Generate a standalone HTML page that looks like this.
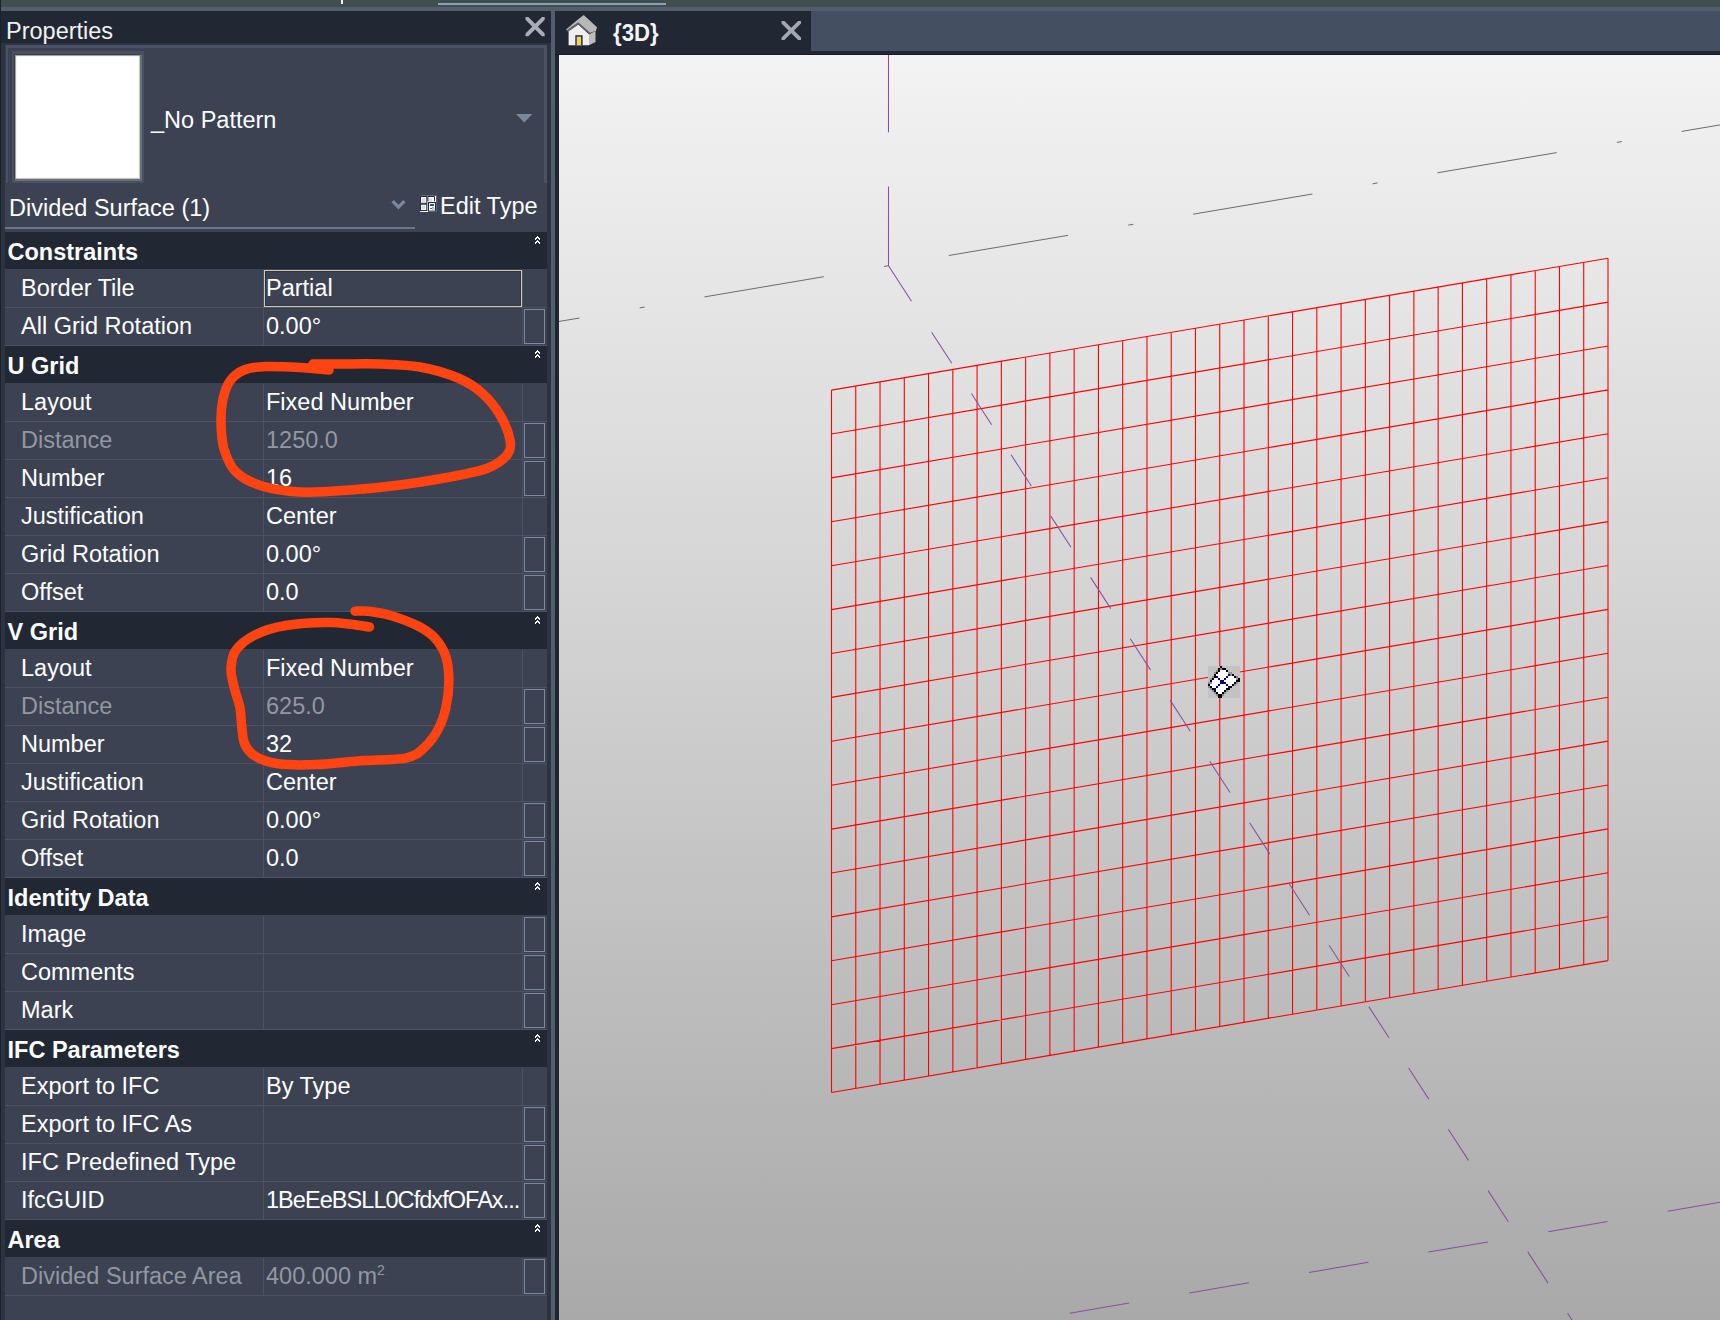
<!DOCTYPE html>
<html><head><meta charset="utf-8"><title>Revit</title>
<style>
*{margin:0;padding:0;box-sizing:border-box}
html,body{width:1720px;height:1320px;overflow:hidden;background:#1f2631;font-family:"Liberation Sans", sans-serif;}
.a{position:absolute}
.t{position:absolute;white-space:nowrap;color:#ffffff;font-size:23.5px;line-height:37px;height:37px}
.g{color:#8b909a}
.h{position:absolute;left:5px;width:542px;height:37px;background:#212833}
.ht{position:absolute;left:2.5px;top:2px;font-weight:bold;color:#fff;font-size:23.5px;line-height:37px;white-space:nowrap}
.r{position:absolute;left:5px;width:542px;height:38px;background:#3c4252;border-bottom:1px solid #4a5263}
.c1{position:absolute;left:258px;top:0;width:1px;height:37px;background:#4a5263}
.c2{position:absolute;left:517px;top:0;width:1px;height:37px;background:#4a5263}
.bx{position:absolute;left:519px;top:1px;width:21px;height:35px;border:1px solid #7d88a0}
.lb{position:absolute;left:16px;top:0px;white-space:nowrap;color:#fff;font-size:23.5px;line-height:37px}
.vl{position:absolute;left:261px;top:0px;white-space:nowrap;color:#fff;font-size:23.5px;line-height:37px}
.lb.g,.vl.g{color:#9397a1}
</style></head><body>

<div class="a" style="left:0;top:0;width:1720px;height:7px;background:#414e4e"></div>
<div class="a" style="left:341px;top:0;width:2px;height:4px;background:#f4f4f4"></div>
<div class="a" style="left:438px;top:3px;width:228px;height:2px;background:#8aa0b4"></div>
<div class="a" style="left:0;top:7px;width:1720px;height:4px;background:#525e6e"></div>
<div class="a" style="left:0;top:0;width:1px;height:1320px;background:#1c2129"></div>
<div class="a" style="left:1px;top:11px;width:550px;height:1309px;background:#2d3340"></div>
<div class="a" style="left:1px;top:11px;width:550px;height:32px;background:#212833"></div>
<div class="t" style="left:6px;top:12.5px;color:#f2f2f2">Properties</div>
<svg class="a" style="left:0;top:0" width="560" height="50"><defs><clipPath id="cx1"><rect x="525.5" y="17" width="19.2" height="19.3"/></clipPath></defs><path clip-path="url(#cx1)" d="M523.3 14.7 L547 38.6 M547 14.7 L523.3 38.6" stroke="#a8adb8" stroke-width="3.9"/></svg>
<div class="a" style="left:5px;top:45px;width:542px;height:138px;background:#3c4252;border-top:3px solid #4a5366;border-left:3px solid #4a5366;border-right:3px solid #4a5366"></div>
<div class="a" style="left:5px;top:45px;width:1px;height:138px;background:#394050"></div>
<div class="a" style="left:12px;top:51px;width:132px;height:132px;background:#475064"></div>
<div class="a" style="left:14px;top:54px;width:128px;height:127px;background:#fff;border-style:solid;border-width:1px 2px 2px 1px;border-color:#3e3e3e #6e6e6e #6e6e6e #3e3e3e;box-shadow:inset 1px 1px 1px #9a9a9a, inset -1px -1px 1px #c0c0c0"></div>
<div class="t" style="left:151px;top:102px">_No Pattern</div>
<svg class="a" style="left:510px;top:108px" width="30" height="20"><path d="M6 6 L22.5 6 L14.25 14.5 Z" fill="#7a879c"/></svg>
<div class="a" style="left:5px;top:183px;width:542px;height:49px;background:#3c4252"></div>
<div class="t" style="left:9px;top:190px">Divided Surface (1)</div>
<svg class="a" style="left:386px;top:194px" width="26" height="22"><path d="M6.6 7.2 L12.5 13.1 L18.4 7.2" fill="none" stroke="#7a879c" stroke-width="3.3"/></svg>
<div class="a" style="left:5px;top:227px;width:410px;height:2px;background:#6a7688"></div>
<svg class="a" style="left:0;top:0" width="440" height="215">
<rect x="420.2" y="195.8" width="16" height="16.2" fill="#fbfbfb"/>
<rect x="420.5" y="196.5" width="6.3" height="6.8" fill="#f4f5f7" stroke="#262a33" stroke-width="1"/>
<rect x="422" y="198.5" width="3" height="3.3" fill="#d9dbe0"/>
<path d="M427.9 196.5 H434.5 V201.3 M427.9 196.5 V201.3" fill="none" stroke="#262a33" stroke-width="1"/>
<rect x="429" y="198.5" width="3" height="2.8" fill="#d9dbe0"/>
<rect x="420.5" y="204.2" width="6.3" height="6.3" fill="#f4f5f7" stroke="#262a33" stroke-width="1"/>
<rect x="422" y="205.8" width="3" height="3.2" fill="#d9dbe0"/>
<rect x="428.5" y="202.5" width="7" height="8.7" fill="#fff" stroke="#262a33" stroke-width="1.1"/>
<rect x="430" y="204" width="4" height="2" rx="0.5" fill="#0a4fb4"/>
<rect x="430.2" y="208" width="1.6" height="0.9" fill="#262a33"/>
<path d="M432.9 207.2 L433.8 208.4 L432.9 209.6 L432 208.4 Z" fill="#fff" stroke="#4a5a80" stroke-width="0.7"/>
</svg>
<div class="t" style="left:440px;top:187.5px">Edit Type</div>
<div class="a" style="left:5px;top:232px;width:542px;height:1088px;background:#3c4252"></div>
<div class="h" style="top:232px"><div class="ht">Constraints</div><svg class="a" style="left:520px;top:0px" width="20" height="16" fill="#fff" shape-rendering="crispEdges"><rect x="12" y="4" width="1" height="1"/><rect x="11" y="5" width="1" height="1"/><rect x="12" y="5" width="1" height="1"/><rect x="13" y="5" width="1" height="1"/><rect x="10" y="6" width="1" height="1"/><rect x="11" y="6" width="1" height="1"/><rect x="13" y="6" width="1" height="1"/><rect x="14" y="6" width="1" height="1"/><rect x="10" y="7" width="1" height="1"/><rect x="14" y="7" width="1" height="1"/><rect x="12" y="8" width="1" height="1"/><rect x="11" y="9" width="1" height="1"/><rect x="12" y="9" width="1" height="1"/><rect x="13" y="9" width="1" height="1"/><rect x="10" y="10" width="1" height="1"/><rect x="11" y="10" width="1" height="1"/><rect x="13" y="10" width="1" height="1"/><rect x="14" y="10" width="1" height="1"/><rect x="10" y="11" width="1" height="1"/><rect x="14" y="11" width="1" height="1"/></svg></div>
<div class="r" style="top:270px"><div class="c1"></div><div class="c2"></div><div class="lb">Border Tile</div><div class="a" style="left:259px;top:0;width:258px;height:37px;border:1px solid #d4c8b0;box-shadow:inset 0 0 0 1px #2e3442"></div><div class="vl" style="">Partial</div></div>
<div class="r" style="top:308px"><div class="c1"></div><div class="c2"></div><div class="lb">All Grid Rotation</div><div class="vl" style="">0.00°</div><div class="bx"></div></div>
<div class="h" style="top:346px"><div class="ht">U Grid</div><svg class="a" style="left:520px;top:0px" width="20" height="16" fill="#fff" shape-rendering="crispEdges"><rect x="12" y="4" width="1" height="1"/><rect x="11" y="5" width="1" height="1"/><rect x="12" y="5" width="1" height="1"/><rect x="13" y="5" width="1" height="1"/><rect x="10" y="6" width="1" height="1"/><rect x="11" y="6" width="1" height="1"/><rect x="13" y="6" width="1" height="1"/><rect x="14" y="6" width="1" height="1"/><rect x="10" y="7" width="1" height="1"/><rect x="14" y="7" width="1" height="1"/><rect x="12" y="8" width="1" height="1"/><rect x="11" y="9" width="1" height="1"/><rect x="12" y="9" width="1" height="1"/><rect x="13" y="9" width="1" height="1"/><rect x="10" y="10" width="1" height="1"/><rect x="11" y="10" width="1" height="1"/><rect x="13" y="10" width="1" height="1"/><rect x="14" y="10" width="1" height="1"/><rect x="10" y="11" width="1" height="1"/><rect x="14" y="11" width="1" height="1"/></svg></div>
<div class="r" style="top:384px"><div class="c1"></div><div class="c2"></div><div class="lb">Layout</div><div class="vl" style="">Fixed Number</div></div>
<div class="r" style="top:422px"><div class="c1"></div><div class="c2"></div><div class="lb g">Distance</div><div class="vl g" style="">1250.0</div><div class="bx"></div></div>
<div class="r" style="top:460px"><div class="c1"></div><div class="c2"></div><div class="lb">Number</div><div class="vl" style="">16</div><div class="bx"></div></div>
<div class="r" style="top:498px"><div class="c1"></div><div class="c2"></div><div class="lb">Justification</div><div class="vl" style="">Center</div></div>
<div class="r" style="top:536px"><div class="c1"></div><div class="c2"></div><div class="lb">Grid Rotation</div><div class="vl" style="">0.00°</div><div class="bx"></div></div>
<div class="r" style="top:574px"><div class="c1"></div><div class="c2"></div><div class="lb">Offset</div><div class="vl" style="">0.0</div><div class="bx"></div></div>
<div class="h" style="top:612px"><div class="ht">V Grid</div><svg class="a" style="left:520px;top:0px" width="20" height="16" fill="#fff" shape-rendering="crispEdges"><rect x="12" y="4" width="1" height="1"/><rect x="11" y="5" width="1" height="1"/><rect x="12" y="5" width="1" height="1"/><rect x="13" y="5" width="1" height="1"/><rect x="10" y="6" width="1" height="1"/><rect x="11" y="6" width="1" height="1"/><rect x="13" y="6" width="1" height="1"/><rect x="14" y="6" width="1" height="1"/><rect x="10" y="7" width="1" height="1"/><rect x="14" y="7" width="1" height="1"/><rect x="12" y="8" width="1" height="1"/><rect x="11" y="9" width="1" height="1"/><rect x="12" y="9" width="1" height="1"/><rect x="13" y="9" width="1" height="1"/><rect x="10" y="10" width="1" height="1"/><rect x="11" y="10" width="1" height="1"/><rect x="13" y="10" width="1" height="1"/><rect x="14" y="10" width="1" height="1"/><rect x="10" y="11" width="1" height="1"/><rect x="14" y="11" width="1" height="1"/></svg></div>
<div class="r" style="top:650px"><div class="c1"></div><div class="c2"></div><div class="lb">Layout</div><div class="vl" style="">Fixed Number</div></div>
<div class="r" style="top:688px"><div class="c1"></div><div class="c2"></div><div class="lb g">Distance</div><div class="vl g" style="">625.0</div><div class="bx"></div></div>
<div class="r" style="top:726px"><div class="c1"></div><div class="c2"></div><div class="lb">Number</div><div class="vl" style="">32</div><div class="bx"></div></div>
<div class="r" style="top:764px"><div class="c1"></div><div class="c2"></div><div class="lb">Justification</div><div class="vl" style="">Center</div></div>
<div class="r" style="top:802px"><div class="c1"></div><div class="c2"></div><div class="lb">Grid Rotation</div><div class="vl" style="">0.00°</div><div class="bx"></div></div>
<div class="r" style="top:840px"><div class="c1"></div><div class="c2"></div><div class="lb">Offset</div><div class="vl" style="">0.0</div><div class="bx"></div></div>
<div class="h" style="top:878px"><div class="ht">Identity Data</div><svg class="a" style="left:520px;top:0px" width="20" height="16" fill="#fff" shape-rendering="crispEdges"><rect x="12" y="4" width="1" height="1"/><rect x="11" y="5" width="1" height="1"/><rect x="12" y="5" width="1" height="1"/><rect x="13" y="5" width="1" height="1"/><rect x="10" y="6" width="1" height="1"/><rect x="11" y="6" width="1" height="1"/><rect x="13" y="6" width="1" height="1"/><rect x="14" y="6" width="1" height="1"/><rect x="10" y="7" width="1" height="1"/><rect x="14" y="7" width="1" height="1"/><rect x="12" y="8" width="1" height="1"/><rect x="11" y="9" width="1" height="1"/><rect x="12" y="9" width="1" height="1"/><rect x="13" y="9" width="1" height="1"/><rect x="10" y="10" width="1" height="1"/><rect x="11" y="10" width="1" height="1"/><rect x="13" y="10" width="1" height="1"/><rect x="14" y="10" width="1" height="1"/><rect x="10" y="11" width="1" height="1"/><rect x="14" y="11" width="1" height="1"/></svg></div>
<div class="r" style="top:916px"><div class="c1"></div><div class="c2"></div><div class="lb">Image</div><div class="bx"></div></div>
<div class="r" style="top:954px"><div class="c1"></div><div class="c2"></div><div class="lb">Comments</div><div class="bx"></div></div>
<div class="r" style="top:992px"><div class="c1"></div><div class="c2"></div><div class="lb">Mark</div><div class="bx"></div></div>
<div class="h" style="top:1030px"><div class="ht">IFC Parameters</div><svg class="a" style="left:520px;top:0px" width="20" height="16" fill="#fff" shape-rendering="crispEdges"><rect x="12" y="4" width="1" height="1"/><rect x="11" y="5" width="1" height="1"/><rect x="12" y="5" width="1" height="1"/><rect x="13" y="5" width="1" height="1"/><rect x="10" y="6" width="1" height="1"/><rect x="11" y="6" width="1" height="1"/><rect x="13" y="6" width="1" height="1"/><rect x="14" y="6" width="1" height="1"/><rect x="10" y="7" width="1" height="1"/><rect x="14" y="7" width="1" height="1"/><rect x="12" y="8" width="1" height="1"/><rect x="11" y="9" width="1" height="1"/><rect x="12" y="9" width="1" height="1"/><rect x="13" y="9" width="1" height="1"/><rect x="10" y="10" width="1" height="1"/><rect x="11" y="10" width="1" height="1"/><rect x="13" y="10" width="1" height="1"/><rect x="14" y="10" width="1" height="1"/><rect x="10" y="11" width="1" height="1"/><rect x="14" y="11" width="1" height="1"/></svg></div>
<div class="r" style="top:1068px"><div class="c1"></div><div class="c2"></div><div class="lb">Export to IFC</div><div class="vl" style="">By Type</div></div>
<div class="r" style="top:1106px"><div class="c1"></div><div class="c2"></div><div class="lb">Export to IFC As</div><div class="bx"></div></div>
<div class="r" style="top:1144px"><div class="c1"></div><div class="c2"></div><div class="lb">IFC Predefined Type</div><div class="bx"></div></div>
<div class="r" style="top:1182px"><div class="c1"></div><div class="c2"></div><div class="lb">IfcGUID</div><div class="vl" style=";letter-spacing:-0.95px">1BeEeBSLL0CfdxfOFAx...</div><div class="bx"></div></div>
<div class="h" style="top:1220px"><div class="ht">Area</div><svg class="a" style="left:520px;top:0px" width="20" height="16" fill="#fff" shape-rendering="crispEdges"><rect x="12" y="4" width="1" height="1"/><rect x="11" y="5" width="1" height="1"/><rect x="12" y="5" width="1" height="1"/><rect x="13" y="5" width="1" height="1"/><rect x="10" y="6" width="1" height="1"/><rect x="11" y="6" width="1" height="1"/><rect x="13" y="6" width="1" height="1"/><rect x="14" y="6" width="1" height="1"/><rect x="10" y="7" width="1" height="1"/><rect x="14" y="7" width="1" height="1"/><rect x="12" y="8" width="1" height="1"/><rect x="11" y="9" width="1" height="1"/><rect x="12" y="9" width="1" height="1"/><rect x="13" y="9" width="1" height="1"/><rect x="10" y="10" width="1" height="1"/><rect x="11" y="10" width="1" height="1"/><rect x="13" y="10" width="1" height="1"/><rect x="14" y="10" width="1" height="1"/><rect x="10" y="11" width="1" height="1"/><rect x="14" y="11" width="1" height="1"/></svg></div>
<div class="r" style="top:1258px"><div class="c1"></div><div class="c2"></div><div class="lb g">Divided Surface Area</div><div class="vl g" style="">400.000 m<sup style="font-size:14px;vertical-align:9px;line-height:0">2</sup></div><div class="bx"></div></div>
<div class="a" style="left:551px;top:11px;width:4px;height:1309px;background:#525e6e"></div>
<div class="a" style="left:555px;top:11px;width:1165px;height:44px;background:#212733"></div>
<div class="a" style="left:811px;top:11px;width:909px;height:40px;background:#454f62"></div>
<div class="a" style="left:555px;top:54px;width:1165px;height:1px;background:#161b25"></div>
<div class="a" style="left:555px;top:11px;width:256px;height:43px;background:#212833"></div>
<svg class="a" style="left:0;top:0" width="620" height="50">
<polygon points="566,29.6 578.2,19.2 583.7,15.1 597,27.3 596,30.8 589.8,33.1 578.2,23 568.6,31.4" fill="#b8b8b8"/>
<polygon points="568.6,31.4 578.2,24.4 589,34.3 589,45.3 568.6,45.3" fill="#efefef"/>
<polygon points="589,34.3 595.5,31 595.5,42 589,45.3" fill="#bcbcbc"/>
<polyline points="567,31 578.2,23.3 590.5,34" fill="none" stroke="#60646c" stroke-width="1.6"/>
<rect x="575.3" y="35.2" width="7.3" height="10.1" fill="#2a2f38"/>
<rect x="576.7" y="36.7" width="4.4" height="8.6" fill="#f0d060"/>
</svg>
<div class="a" style="left:612.5px;top:14px;color:#f4f4f4;font-weight:bold;font-size:24.5px;line-height:37px;white-space:nowrap;transform:scaleX(0.905);transform-origin:0 0">{3D}</div>
<svg class="a" style="left:0;top:0" width="820" height="50"><defs><clipPath id="cx2"><rect x="781.5" y="21" width="19.5" height="19"/></clipPath></defs><path clip-path="url(#cx2)" d="M779.3 18.7 L803.2 42.3 M803.2 18.7 L779.3 42.3" stroke="#a2a7b3" stroke-width="3.9"/></svg>
<div class="a" style="left:559px;top:55px;width:1161px;height:1265px;background:linear-gradient(#f3f3f3 0%,#cfcfcf 50%,#a9a9a9 100%)"></div>
<svg class="a" style="left:0;top:0" width="1720" height="1320" viewBox="0 0 1720 1320"><defs><clipPath id="vp"><rect x="559" y="55" width="1161" height="1265"/></clipPath></defs><g clip-path="url(#vp)"><path d="M831.50 390.10V1092.50M855.77 385.98V1088.38M880.03 381.86V1084.26M904.30 377.74V1080.14M928.56 373.61V1076.01M952.83 369.49V1071.89M977.09 365.37V1067.77M1001.36 361.25V1063.65M1025.62 357.13V1059.53M1049.89 353.01V1055.41M1074.16 348.88V1051.28M1098.42 344.76V1047.16M1122.69 340.64V1043.04M1146.95 336.52V1038.92M1171.22 332.40V1034.80M1195.48 328.28V1030.68M1219.75 324.16V1026.56M1244.02 320.03V1022.43M1268.28 315.91V1018.31M1292.55 311.79V1014.19M1316.81 307.67V1010.07M1341.08 303.55V1005.95M1365.34 299.43V1001.83M1389.61 295.31V997.71M1413.88 291.18V993.58M1438.14 287.06V989.46M1462.41 282.94V985.34M1486.67 278.82V981.22M1510.94 274.70V977.10M1535.20 270.58V972.98M1559.47 266.45V968.85M1583.73 262.33V964.73M1608.00 258.21V960.61M831.50 390.10L1608.00 258.21M831.50 434.00L1608.00 302.11M831.50 477.90L1608.00 346.01M831.50 521.80L1608.00 389.91M831.50 565.70L1608.00 433.81M831.50 609.60L1608.00 477.71M831.50 653.50L1608.00 521.61M831.50 697.40L1608.00 565.51M831.50 741.30L1608.00 609.41M831.50 785.20L1608.00 653.31M831.50 829.10L1608.00 697.21M831.50 873.00L1608.00 741.11M831.50 916.90L1608.00 785.01M831.50 960.80L1608.00 828.91M831.50 1004.70L1608.00 872.81M831.50 1048.60L1608.00 916.71M831.50 1092.50L1608.00 960.61" fill="none" stroke="#ff0000" stroke-width="1.1"/><path d="M460.2 338.2L579.5 318.0M639.7 307.9L644.7 307.0M704.5 296.9L823.8 276.7M884.0 266.5L889.0 265.6M948.8 255.5L1068.1 235.3M1128.3 225.1L1133.3 224.3M1193.1 214.2L1312.4 194.0M1372.6 183.8L1377.6 182.9M1437.4 172.8L1556.7 152.6M1616.9 142.4L1621.9 141.6M1681.7 131.4L1801.0 111.2M1861.2 101.1L1866.2 100.2" fill="none" stroke="#6c6c6c" stroke-width="1.0"/><path d="M888.5 186.5V265.7M888.5 40V132.3M888.5 265.7L911.5 301.2M931.6 332.2L951.8 363.3M971.4 393.5L991.6 424.7M1011.1 454.8L1031.3 486.0M1050.8 516.1L1071.0 547.3M1090.6 577.4L1110.8 608.6M1130.3 638.8L1150.5 669.9M1170.1 700.1L1190.3 731.2M1209.8 761.4L1230.0 792.5M1249.6 822.7L1269.8 853.9M1289.3 884.0L1309.5 915.2M1329.1 945.3L1349.3 976.5M1368.8 1006.6L1389.0 1037.8M1408.6 1068.0L1428.8 1099.1M1448.3 1129.3L1468.5 1160.4M1488.1 1190.6L1508.3 1221.7M1527.8 1251.9L1548.0 1283.1M1567.6 1313.2L1587.8 1344.4M1607.3 1374.5L1627.5 1405.7M950.1 1333.7L1009.6 1323.6M1069.7 1313.3L1129.2 1303.1M1189.3 1292.9L1248.8 1282.7M1308.9 1272.5L1368.4 1262.3M1428.5 1252.1L1488.0 1241.9M1548.1 1231.7L1607.6 1221.5M1667.7 1211.3L1727.2 1201.1" fill="none" stroke="#8750a2" stroke-width="1.05"/><rect x="1208" y="666" width="32" height="32" fill="#c2c2c2"/><rect x="1220" y="666" width="2" height="2" fill="#000"/><rect x="1218" y="668" width="2" height="2" fill="#000"/><rect x="1222" y="668" width="2" height="2" fill="#000"/><rect x="1224" y="668" width="2" height="2" fill="#000"/><rect x="1220" y="668" width="2" height="2" fill="#8e8e8e"/><rect x="1216" y="670" width="2" height="2" fill="#8e8e8e"/><rect x="1218" y="670" width="2" height="2" fill="#000"/><rect x="1226" y="670" width="2" height="2" fill="#000"/><rect x="1220" y="670" width="2" height="2" fill="#fff"/><rect x="1222" y="670" width="2" height="2" fill="#fff"/><rect x="1224" y="670" width="2" height="2" fill="#fff"/><rect x="1214" y="672" width="2" height="2" fill="#8e8e8e"/><rect x="1228" y="672" width="2" height="2" fill="#8e8e8e"/><rect x="1230" y="672" width="2" height="2" fill="#8e8e8e"/><rect x="1216" y="672" width="2" height="2" fill="#000"/><rect x="1218" y="672" width="2" height="2" fill="#fff"/><rect x="1220" y="672" width="2" height="2" fill="#fff"/><rect x="1222" y="672" width="2" height="2" fill="#fff"/><rect x="1224" y="672" width="2" height="2" fill="#fff"/><rect x="1226" y="672" width="2" height="2" fill="#fff"/><rect x="1214" y="674" width="2" height="2" fill="#000"/><rect x="1232" y="674" width="2" height="2" fill="#000"/><rect x="1216" y="674" width="2" height="2" fill="#fff"/><rect x="1218" y="674" width="2" height="2" fill="#fff"/><rect x="1220" y="674" width="2" height="2" fill="#fff"/><rect x="1222" y="674" width="2" height="2" fill="#fff"/><rect x="1224" y="674" width="2" height="2" fill="#fff"/><rect x="1226" y="674" width="2" height="2" fill="#fff"/><rect x="1228" y="674" width="2" height="2" fill="#000080"/><rect x="1230" y="674" width="2" height="2" fill="#8e8e8e"/><rect x="1212" y="676" width="2" height="2" fill="#8e8e8e"/><rect x="1236" y="676" width="2" height="2" fill="#8e8e8e"/><rect x="1214" y="676" width="2" height="2" fill="#000"/><rect x="1234" y="676" width="2" height="2" fill="#000"/><rect x="1216" y="676" width="2" height="2" fill="#000080"/><rect x="1226" y="676" width="2" height="2" fill="#000080"/><rect x="1218" y="676" width="2" height="2" fill="#fff"/><rect x="1220" y="676" width="2" height="2" fill="#fff"/><rect x="1222" y="676" width="2" height="2" fill="#fff"/><rect x="1224" y="676" width="2" height="2" fill="#fff"/><rect x="1228" y="676" width="2" height="2" fill="#fff"/><rect x="1230" y="676" width="2" height="2" fill="#fff"/><rect x="1232" y="676" width="2" height="2" fill="#fff"/><rect x="1210" y="678" width="2" height="2" fill="#8e8e8e"/><rect x="1236" y="678" width="2" height="2" fill="#8e8e8e"/><rect x="1212" y="678" width="2" height="2" fill="#000"/><rect x="1238" y="678" width="2" height="2" fill="#000"/><rect x="1214" y="678" width="2" height="2" fill="#fff"/><rect x="1216" y="678" width="2" height="2" fill="#fff"/><rect x="1220" y="678" width="2" height="2" fill="#fff"/><rect x="1222" y="678" width="2" height="2" fill="#fff"/><rect x="1226" y="678" width="2" height="2" fill="#fff"/><rect x="1228" y="678" width="2" height="2" fill="#fff"/><rect x="1230" y="678" width="2" height="2" fill="#fff"/><rect x="1232" y="678" width="2" height="2" fill="#fff"/><rect x="1234" y="678" width="2" height="2" fill="#fff"/><rect x="1218" y="678" width="2" height="2" fill="#000080"/><rect x="1224" y="678" width="2" height="2" fill="#000080"/><rect x="1210" y="680" width="2" height="2" fill="#000"/><rect x="1236" y="680" width="2" height="2" fill="#000"/><rect x="1238" y="680" width="2" height="2" fill="#000"/><rect x="1212" y="680" width="2" height="2" fill="#fff"/><rect x="1214" y="680" width="2" height="2" fill="#fff"/><rect x="1216" y="680" width="2" height="2" fill="#fff"/><rect x="1218" y="680" width="2" height="2" fill="#fff"/><rect x="1224" y="680" width="2" height="2" fill="#fff"/><rect x="1226" y="680" width="2" height="2" fill="#fff"/><rect x="1228" y="680" width="2" height="2" fill="#fff"/><rect x="1230" y="680" width="2" height="2" fill="#fff"/><rect x="1232" y="680" width="2" height="2" fill="#fff"/><rect x="1234" y="680" width="2" height="2" fill="#fff"/><rect x="1220" y="680" width="2" height="2" fill="#000080"/><rect x="1222" y="680" width="2" height="2" fill="#000080"/><rect x="1208" y="682" width="2" height="2" fill="#8e8e8e"/><rect x="1210" y="682" width="2" height="2" fill="#8e8e8e"/><rect x="1236" y="682" width="2" height="2" fill="#8e8e8e"/><rect x="1212" y="682" width="2" height="2" fill="#fff"/><rect x="1214" y="682" width="2" height="2" fill="#fff"/><rect x="1216" y="682" width="2" height="2" fill="#fff"/><rect x="1218" y="682" width="2" height="2" fill="#fff"/><rect x="1226" y="682" width="2" height="2" fill="#fff"/><rect x="1228" y="682" width="2" height="2" fill="#fff"/><rect x="1230" y="682" width="2" height="2" fill="#fff"/><rect x="1232" y="682" width="2" height="2" fill="#fff"/><rect x="1220" y="682" width="2" height="2" fill="#000080"/><rect x="1222" y="682" width="2" height="2" fill="#000080"/><rect x="1224" y="682" width="2" height="2" fill="#000080"/><rect x="1234" y="682" width="2" height="2" fill="#000"/><rect x="1208" y="684" width="2" height="2" fill="#000"/><rect x="1232" y="684" width="2" height="2" fill="#000"/><rect x="1210" y="684" width="2" height="2" fill="#fff"/><rect x="1212" y="684" width="2" height="2" fill="#fff"/><rect x="1214" y="684" width="2" height="2" fill="#fff"/><rect x="1216" y="684" width="2" height="2" fill="#fff"/><rect x="1220" y="684" width="2" height="2" fill="#fff"/><rect x="1222" y="684" width="2" height="2" fill="#fff"/><rect x="1224" y="684" width="2" height="2" fill="#fff"/><rect x="1228" y="684" width="2" height="2" fill="#fff"/><rect x="1230" y="684" width="2" height="2" fill="#fff"/><rect x="1218" y="684" width="2" height="2" fill="#000080"/><rect x="1226" y="684" width="2" height="2" fill="#000080"/><rect x="1234" y="684" width="2" height="2" fill="#8e8e8e"/><rect x="1208" y="686" width="2" height="2" fill="#8e8e8e"/><rect x="1210" y="686" width="2" height="2" fill="#000"/><rect x="1230" y="686" width="2" height="2" fill="#000"/><rect x="1212" y="686" width="2" height="2" fill="#fff"/><rect x="1214" y="686" width="2" height="2" fill="#fff"/><rect x="1218" y="686" width="2" height="2" fill="#fff"/><rect x="1220" y="686" width="2" height="2" fill="#fff"/><rect x="1222" y="686" width="2" height="2" fill="#fff"/><rect x="1224" y="686" width="2" height="2" fill="#fff"/><rect x="1226" y="686" width="2" height="2" fill="#fff"/><rect x="1216" y="686" width="2" height="2" fill="#000080"/><rect x="1228" y="686" width="2" height="2" fill="#000080"/><rect x="1210" y="688" width="2" height="2" fill="#8e8e8e"/><rect x="1212" y="688" width="2" height="2" fill="#000"/><rect x="1226" y="688" width="2" height="2" fill="#000"/><rect x="1228" y="688" width="2" height="2" fill="#000"/><rect x="1214" y="688" width="2" height="2" fill="#000080"/><rect x="1216" y="688" width="2" height="2" fill="#fff"/><rect x="1218" y="688" width="2" height="2" fill="#fff"/><rect x="1220" y="688" width="2" height="2" fill="#fff"/><rect x="1222" y="688" width="2" height="2" fill="#fff"/><rect x="1224" y="688" width="2" height="2" fill="#fff"/><rect x="1212" y="690" width="2" height="2" fill="#8e8e8e"/><rect x="1226" y="690" width="2" height="2" fill="#8e8e8e"/><rect x="1214" y="690" width="2" height="2" fill="#000"/><rect x="1224" y="690" width="2" height="2" fill="#000"/><rect x="1216" y="690" width="2" height="2" fill="#fff"/><rect x="1218" y="690" width="2" height="2" fill="#fff"/><rect x="1220" y="690" width="2" height="2" fill="#fff"/><rect x="1222" y="690" width="2" height="2" fill="#fff"/><rect x="1214" y="692" width="2" height="2" fill="#8e8e8e"/><rect x="1224" y="692" width="2" height="2" fill="#8e8e8e"/><rect x="1216" y="692" width="2" height="2" fill="#000"/><rect x="1222" y="692" width="2" height="2" fill="#000"/><rect x="1218" y="692" width="2" height="2" fill="#fff"/><rect x="1220" y="692" width="2" height="2" fill="#fff"/><rect x="1216" y="694" width="2" height="2" fill="#8e8e8e"/><rect x="1222" y="694" width="2" height="2" fill="#8e8e8e"/><rect x="1218" y="694" width="2" height="2" fill="#000"/><rect x="1220" y="694" width="2" height="2" fill="#000"/><rect x="1218" y="696" width="2" height="2" fill="#000"/><rect x="1220" y="696" width="2" height="2" fill="#000"/></g><path d="M329 370C324.2 369.6 310.5 368.1 300 367.5C289.5 366.9 275.3 366.1 266 366.5C256.7 366.9 250.0 367.6 244 370C238.0 372.4 233.5 376.2 230 381C226.5 385.8 224.5 392.2 223 399C221.5 405.8 220.8 413.7 221 422C221.2 430.3 221.5 440.7 224 449C226.5 457.3 229.7 465.8 236 472C242.3 478.2 251.3 482.7 262 486C272.7 489.3 285.3 491.3 300 492C314.7 492.7 333.3 491.2 350 490C366.7 488.8 383.3 487.2 400 485C416.7 482.8 435.3 479.8 450 477C464.7 474.2 478.5 471.7 488 468C497.5 464.3 503.3 459.7 507 455C510.7 450.3 511.2 446.7 510 440C508.8 433.3 504.7 422.8 500 415C495.3 407.2 489.0 399.2 482 393C475.0 386.8 468.3 382.3 458 378C447.7 373.7 433.0 369.3 420 367C407.0 364.7 393.3 364.5 380 364C366.7 363.5 351.2 364.0 340 364C328.8 364.0 317.5 364.0 313 364" fill="none" stroke="#ff4311" stroke-width="9.5" stroke-linecap="round" stroke-linejoin="round"/><path d="M369.5 627C363.1 626.2 345.0 622.8 331 622.5C317.0 622.2 298.3 623.4 285.6 625.5C272.9 627.6 263.3 630.8 255 635C246.7 639.2 239.7 644.9 235.7 650.5C231.7 656.1 231.3 662.6 231 668.6C230.7 674.6 232.5 680.1 234 686.7C235.5 693.3 238.7 701.5 240 708C241.3 714.5 240.9 720.0 241.7 726C242.5 732.0 242.5 739.2 244.8 744.2C247.1 749.2 249.9 753.0 255.4 756.3C260.9 759.6 267.9 762.4 278 763.8C288.1 765.2 302.0 765.1 315.8 764.6C329.6 764.1 345.9 761.9 361 760.8C376.1 759.7 395.9 760.1 406.5 757.8C417.1 755.5 419.4 752.0 424.7 747.2C430.0 742.4 434.8 735.5 438.3 729C441.8 722.5 444.0 716.0 445.8 708C447.6 700.0 448.9 689.3 448.9 680.7C448.9 672.1 448.1 663.5 445.8 656.5C443.5 649.5 439.7 643.4 435.2 638.4C430.7 633.4 425.9 630.1 418.6 626.3C411.3 622.5 399.7 618.2 391.4 615.7C383.1 613.2 374.8 612.0 368.7 611.2C362.6 610.5 357.3 611.2 355 611.2" fill="none" stroke="#ff4311" stroke-width="9.5" stroke-linecap="round" stroke-linejoin="round"/></svg>
</body></html>
